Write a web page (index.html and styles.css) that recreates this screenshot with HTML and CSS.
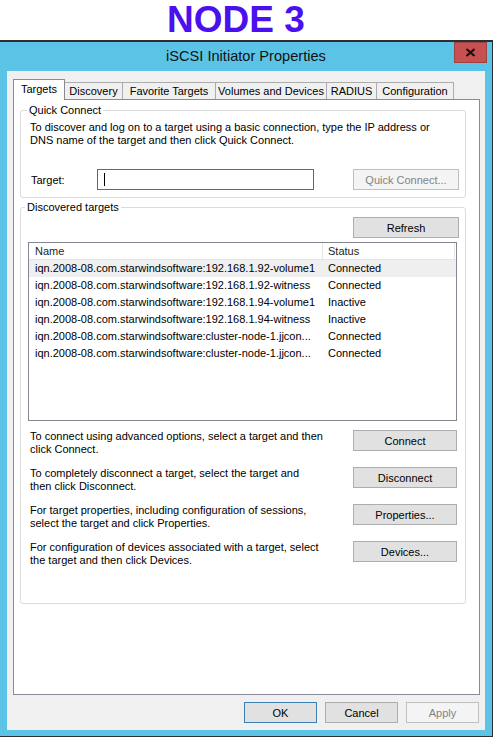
FILE: index.html
```html
<!DOCTYPE html>
<html>
<head>
<meta charset="utf-8">
<title>iSCSI Initiator Properties</title>
<link rel="stylesheet" href="styles.css">
</head>
<body>
<div class="caption">NODE 3</div>
<div class="window">
  <div class="titlebar">
    <div class="title">iSCSI Initiator Properties</div>
    <div class="close"><svg width="11" height="9" viewBox="0 0 11 9"><path d="M1.5 1 L9.5 8 M9.5 1 L1.5 8" stroke="#151515" stroke-width="2.3" fill="none"/></svg></div>
  </div>
  <div class="dlg">
    <div class="tabs">
      <div class="tab sel w1">Targets</div>
      <div class="tab w2">Discovery</div>
      <div class="tab w3">Favorite Targets</div>
      <div class="tab w4">Volumes and Devices</div>
      <div class="tab w5">RADIUS</div>
      <div class="tab w6">Configuration</div>
    </div>
    <div class="panel">
      <fieldset class="group qc">
        <legend>Quick Connect</legend>
        <p class="para">To discover and log on to a target using a basic connection, type the IP address or<br>DNS name of the target and then click Quick Connect.</p>
        <div class="target-row">
          <span class="lbl">Target:</span>
          <div class="input"><span class="caret"></span></div>
          <button class="btn wide disabled">Quick Connect...</button>
        </div>
      </fieldset>
      <fieldset class="group dt">
        <legend>Discovered targets</legend>
        <div class="refresh-row"><button class="btn wide">Refresh</button></div>
        <div class="list">
          <div class="lrow head"><span class="c1">Name</span><span class="c2">Status</span></div>
          <div class="lrow hl"><span class="c1">iqn.2008-08.com.starwindsoftware:192.168.1.92-volume1</span><span class="c2">Connected</span></div>
          <div class="lrow"><span class="c1">iqn.2008-08.com.starwindsoftware:192.168.1.92-witness</span><span class="c2">Connected</span></div>
          <div class="lrow"><span class="c1">iqn.2008-08.com.starwindsoftware:192.168.1.94-volume1</span><span class="c2">Inactive</span></div>
          <div class="lrow"><span class="c1">iqn.2008-08.com.starwindsoftware:192.168.1.94-witness</span><span class="c2">Inactive</span></div>
          <div class="lrow"><span class="c1">iqn.2008-08.com.starwindsoftware:cluster-node-1.jjcon...</span><span class="c2">Connected</span></div>
          <div class="lrow"><span class="c1">iqn.2008-08.com.starwindsoftware:cluster-node-1.jjcon...</span><span class="c2">Connected</span></div>
        </div>
        <div class="actions">
          <div class="arow"><p class="atext">To connect using advanced options, select a target and then<br>click Connect.</p><button class="btn act">Connect</button></div>
          <div class="arow"><p class="atext">To completely disconnect a target, select the target and<br>then click Disconnect.</p><button class="btn act">Disconnect</button></div>
          <div class="arow"><p class="atext">For target properties, including configuration of sessions,<br>select the target and click Properties.</p><button class="btn act">Properties...</button></div>
          <div class="arow"><p class="atext">For configuration of devices associated with a target, select<br>the target and then click Devices.</p><button class="btn act">Devices...</button></div>
        </div>
      </fieldset>
    </div>
    <div class="footer">
      <button class="btn foot default">OK</button>
      <button class="btn foot">Cancel</button>
      <button class="btn foot disabled">Apply</button>
    </div>
  </div>
</div>
</body>
</html>
```
FILE: styles.css
```css
* { box-sizing: border-box; }
html, body { margin: 0; padding: 0; }
body {
  width: 496px;
  height: 740px;
  overflow: hidden;
  background: #fff;
  font-family: "Liberation Sans", Arial, sans-serif;
  font-size: 11px;
  color: #000;
}
.caption {
  height: 40px;
  line-height: 40px;
  padding-left: 167px;
  font-family: "Liberation Sans", Arial, sans-serif;
  font-weight: bold;
  font-size: 37px;
  color: #4a10ee;
}
.window {
  width: 493px;
  background: #5bc4e6;
  border-top: 2px solid #2e2e2e;
  border-right: 1px solid #2e2e2e;
  border-bottom: 1px solid #2e2e2e;
  padding: 0 7px 6px 7px;
}
.titlebar {
  height: 29px;
  display: grid;
  grid-template-columns: 1fr auto 1fr;
}
.title {
  grid-column: 2;
  line-height: 29px;
  font-size: 14.6px;
  color: #111;
}
.close {
  grid-column: 3;
  justify-self: end;
  align-self: start;
  margin-right: -2px;
  width: 33px;
  height: 21px;
  background: #c75050;
  border: 1px solid #a04141;
  display: flex;
  align-items: center;
  justify-content: center;
}
.dlg {
  background: #f0f0f0;
  padding: 8px 5px 7px 6px;
}
.tabs {
  display: flex;
  align-items: flex-end;
  height: 20px;
}
.tab {
  height: 17px;
  line-height: 16px;
  border: 1px solid #acacac;
  border-bottom: none;
  background: #f0f0f0;
  text-align: center;
  margin-left: -1px;
  white-space: nowrap;
}
.tab.sel {
  height: 21px;
  line-height: 19px;
  margin-bottom: -1px;
  margin-left: 0;
  background: #fff;
  border-color: #898c95;
  position: relative;
  z-index: 1;
}
.w1 { width: 52px; }
.w2 { width: 59px; }
.w3 { width: 94px; }
.w4 { width: 112px; }
.w5 { width: 51px; }
.w6 { width: 78px; }
.panel {
  height: 596px;
  background: #fff;
  border: 1px solid #898c95;
  padding: 4px 13px 0 6px;
}
.group {
  margin: 0;
  border: 1px solid #dcdcdc;
  border-radius: 3px;
  min-width: 0;
}
.group legend {
  padding: 0 2px;
  margin-left: -3px;
  line-height: 13px;
  font-size: 11px;
}
.qc { padding: 4px 6px 7px 9px; }
.para {
  margin: 0;
  line-height: 13px;
  white-space: nowrap;
}
.target-row {
  margin-top: 22px;
  display: flex;
  align-items: center;
}
.lbl {
  width: 67px;
  padding-left: 1px;
}
.input {
  width: 217px;
  height: 21px;
  border: 1px solid #45708f;
  background: #fff;
  display: flex;
  align-items: center;
}
.caret {
  display: block;
  width: 1px;
  height: 13px;
  background: #000;
  margin-left: 6px;
}
.btn {
  font-family: "Liberation Sans", Arial, sans-serif;
  font-size: 11px;
  color: #000;
  height: 21px;
  padding: 0;
  background: #e1e1e1;
  border: 1px solid #adadad;
  border-radius: 0;
  text-align: center;
}
.btn.disabled {
  background: #f4f4f4;
  border-color: #bfbfbf;
  color: #838383;
}
.btn.default { border-color: #3c7fb1; }
.wide { width: 106px; }
.target-row .btn { margin-left: auto; }
.dt {
  margin-top: 3px;
  padding: 3px 6px 36px 7px;
}
.refresh-row {
  display: flex;
  justify-content: flex-end;
}
.list {
  margin-top: 4px;
  margin-right: 2px;
  height: 179px;
  border: 1px solid #828790;
  background: #fff;
}
.lrow {
  display: grid;
  grid-template-columns: 294px 132px;
  height: 17px;
  line-height: 17px;
  white-space: nowrap;
}
.lrow .c1 { padding-left: 6px; overflow: hidden; }
.lrow .c2 { padding-left: 5px; }
.lrow.head {
  color: #1e1e1e;
  border-bottom: 1px solid #e5e5e5;
  line-height: 16px;
}
.lrow.head .c1 { border-right: 1px solid #e5e5e5; }
.lrow.head .c2 { border-right: 1px solid #e5e5e5; }
.lrow.hl { background: #efefef; }
.actions {
  margin-top: 9px;
  display: flex;
  flex-direction: column;
  gap: 11px;
}
.arow {
  display: flex;
  align-items: flex-start;
  justify-content: space-between;
}
.atext {
  margin: 0;
  padding-left: 2px;
  line-height: 13px;
  white-space: nowrap;
}
.act {
  width: 104px;
  margin-right: 2px;
}
.footer {
  display: flex;
  justify-content: flex-end;
  gap: 8px;
  margin-top: 7px;
  padding-right: 1px;
}
.foot { width: 73px; }
```
